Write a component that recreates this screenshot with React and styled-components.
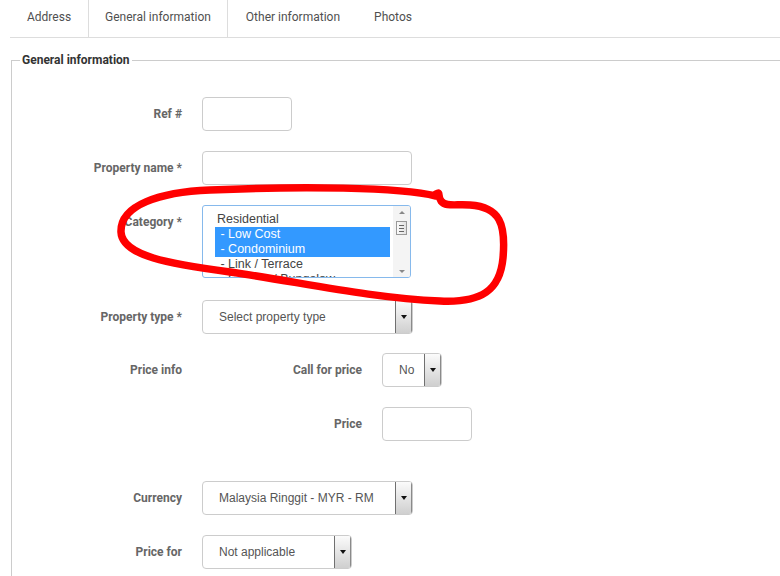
import React from "react";
import styled, { createGlobalStyle } from "styled-components";

const GlobalStyle = createGlobalStyle`
  html, body {
    margin: 0;
    padding: 0;
    background: #fff;
    overflow: hidden;
  }
  body {
    font-family: Roboto, "Liberation Sans", sans-serif;
  }
`;

const Page = styled.div`
  position: relative;
  width: 780px;
  height: 576px;
  overflow: hidden;
`;

const Tabs = styled.ul`
  display: flex;
  margin: 0 0 0 10px;
  padding: 0;
  list-style: none;
  border-bottom: 1px solid #ddd;
  width: 800px;
`;

const Tab = styled.li`
  height: 37px;
  line-height: 34px;
  padding: 0 ${(p) => p.$right ?? 17}px 0 ${(p) => p.$left ?? 17}px;
  font-size: 12px;
  color: #505050;
  border-left: ${(p) => (p.$active ? "1px solid #ddd" : "none")};
  border-right: ${(p) => (p.$active ? "1px solid #ddd" : "none")};
`;

const Fieldset = styled.fieldset`
  margin: 15px 0 0 11px;
  padding: 0;
  width: 820px;
  border: 1px solid #ccc;
  min-height: 560px;
`;

const Legend = styled.legend`
  margin-left: 8px;
  padding: 0 2px;
  font-size: 12px;
  font-weight: bold;
  color: #333;
  line-height: 14px;
`;

const Form = styled.div`
  display: flex;
  flex-direction: column;
  padding-top: 30px;
`;

const Row = styled.div`
  display: grid;
  grid-template-columns: 170px auto;
  column-gap: 20px;
  align-items: start;
  margin-bottom: ${(p) => p.$gap ?? 20}px;
`;

const Label = styled.label`
  text-align: right;
  font-size: 12px;
  font-weight: bold;
  color: #666;
  line-height: ${(p) => p.$lh || 34}px;
  white-space: nowrap;
`;

const SubRow = styled.div`
  display: grid;
  grid-template-columns: 160px auto;
  column-gap: 20px;
  align-items: start;
`;

const Input = styled.div`
  width: ${(p) => p.$w}px;
  height: 32px;
  border: 1px solid #ccc;
  border-radius: 4px;
  background: #fff;
`;

const Select = styled.div`
  display: flex;
  align-items: stretch;
  width: ${(p) => p.$w}px;
  height: 32px;
  border: 1px solid #ccc;
  border-radius: 4px;
  background: #fff;
  overflow: hidden;
`;

const SelectText = styled.span`
  flex: 1;
  padding-left: 16px;
  font-family: "Liberation Sans", Arial, sans-serif;
  font-size: 12px;
  color: #555;
  line-height: 32px;
  white-space: nowrap;
`;

const ArrowBtn = styled.span`
  width: 15px;
  display: flex;
  align-items: center;
  justify-content: center;
  border-left: 1px solid #707070;
  border-right: 1px solid #8a8a8a;
  background: linear-gradient(#fbfbfb, #cfcfcf);
  &::after {
    content: "";
    border-left: 3px solid transparent;
    border-right: 3px solid transparent;
    border-top: 4px solid #111;
  }
`;

const ListBox = styled.div`
  display: flex;
  width: 207px;
  height: 71px;
  border: 1px solid #86b9ec;
  border-radius: 3px;
  background: #fff;
  overflow: hidden;
`;

const Options = styled.div`
  flex: 1;
  padding: 6px 3px 0 12px;
  overflow: hidden;
  font-family: "Liberation Sans", Arial, sans-serif;
  font-size: 12.5px;
`;

const Option = styled.div`
  height: 15px;
  line-height: 15px;
  padding-left: 2px;
  white-space: nowrap;
  color: ${(p) => (p.$sel ? "#fff" : "#444")};
  background: ${(p) => (p.$sel ? "#3399ff" : "transparent")};
`;

const Scrollbar = styled.div`
  width: 17px;
  display: flex;
  flex-direction: column;
  align-items: center;
  background: #f4f4f4;
  padding: 5px 0 4px;
  box-sizing: border-box;
`;

const ScrollArrow = styled.span`
  width: 0;
  height: 0;
  border-left: 3px solid transparent;
  border-right: 3px solid transparent;
  ${(p) =>
    p.$up
      ? "border-bottom: 3px solid #888;"
      : "border-top: 3px solid #888; margin-top: auto;"}
`;

const Thumb = styled.span`
  margin-top: 7px;
  width: 11px;
  height: 14px;
  border: 1px solid #999;
  background: linear-gradient(90deg, #fafafa, #e2e2e2);
  box-sizing: border-box;
  display: flex;
  flex-direction: column;
  justify-content: center;
  align-items: center;
  gap: 2px;
  & > i {
    display: block;
    width: 5px;
    height: 1px;
    background: #666;
  }
`;

const Scribble = styled.svg`
  position: absolute;
  left: 0;
  top: 0;
  pointer-events: none;
`;

export default function App() {
  return (
    <Page>
      <GlobalStyle />
      <Tabs>
        <Tab>Address</Tab>
        <Tab $active $left={16} $right={16}>General information</Tab>
        <Tab $left={18} $right={17}>Other information</Tab>
        <Tab>Photos</Tab>
      </Tabs>
      <Fieldset>
        <Legend>General information</Legend>
        <Form>
          <Row>
            <Label>Ref #</Label>
            <Input $w={88} />
          </Row>
          <Row>
            <Label>Property name *</Label>
            <Input $w={208} />
          </Row>
          <Row $gap={22}>
            <Label $lh={34}>Category *</Label>
            <ListBox>
              <Options>
                <Option>Residential</Option>
                <Option $sel>&nbsp;- Low Cost</Option>
                <Option $sel>&nbsp;- Condominium</Option>
                <Option>&nbsp;- Link / Terrace</Option>
                <Option>&nbsp;- Semi-D / Bungalow</Option>
              </Options>
              <Scrollbar>
                <ScrollArrow $up />
                <Thumb>
                  <i />
                  <i />
                  <i />
                </Thumb>
                <ScrollArrow />
              </Scrollbar>
            </ListBox>
          </Row>
          <Row $gap={19}>
            <Label>Property type *</Label>
            <Select $w={209}>
              <SelectText>Select property type</SelectText>
              <ArrowBtn />
            </Select>
          </Row>
          <Row>
            <Label>Price info</Label>
            <SubRow>
              <Label>Call for price</Label>
              <Select $w={58}>
                <SelectText>No</SelectText>
                <ArrowBtn />
              </Select>
            </SubRow>
          </Row>
          <Row $gap={40}>
            <span />
            <SubRow>
              <Label>Price</Label>
              <Input $w={88} />
            </SubRow>
          </Row>
          <Row>
            <Label>Currency</Label>
            <Select $w={209}>
              <SelectText>Malaysia Ringgit - MYR - RM</SelectText>
              <ArrowBtn />
            </Select>
          </Row>
          <Row>
            <Label>Price for</Label>
            <Select $w={148}>
              <SelectText>Not applicable</SelectText>
              <ArrowBtn />
            </Select>
          </Row>
        </Form>
      </Fieldset>
      <Scribble width="780" height="576" viewBox="0 0 780 576">
        <path
          d="M 436 196 C 400 187, 300 186, 210 190 C 160 192, 120 205, 121 232 C 122 256, 170 264, 230 272 C 300 282, 370 298, 440 301 C 482 303, 500 290, 503 258 C 506 224, 500 207, 470 205 C 455 204, 446 207, 441 201 C 437 195, 441 191, 436 194"
          fill="none"
          stroke="#f00"
          strokeWidth="7.5"
          strokeLinecap="round"
          strokeLinejoin="round"
        />
      </Scribble>
    </Page>
  );
}
